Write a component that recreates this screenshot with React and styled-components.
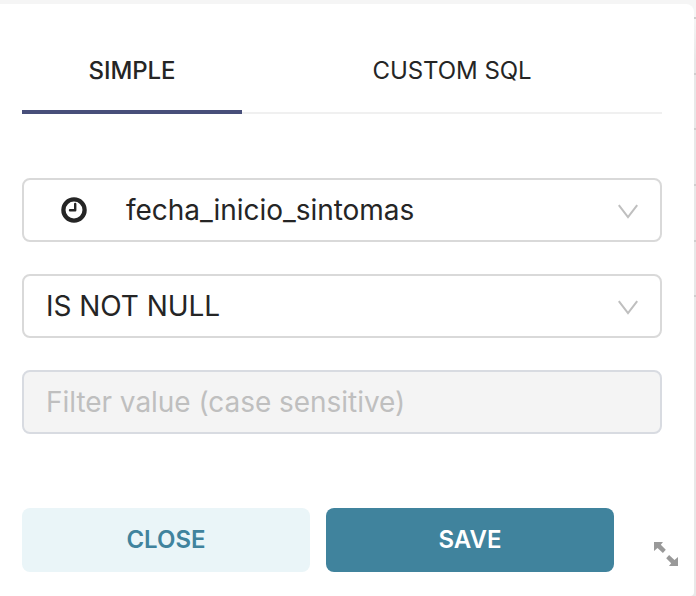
import React from 'react';
import styled, { createGlobalStyle } from 'styled-components';

const Global = createGlobalStyle`
  * { box-sizing: border-box; }
  html, body { margin: 0; background: #fff; overflow: hidden; }
  body { font-family: Inter, "Liberation Sans", sans-serif; color: #252525; }
`;
const Backdrop = styled.div`
  height: 596px;
  width: 696px;
  padding-top: 4px;
  display: flex;
  background: linear-gradient(#f5f5f5 0 16px, #e8e8e8 60px);
`;
const Popover = styled.main`
  width: 694px;
  flex: none;
  height: 592px;
  padding: 26px 32px 24px 22px;
  background: #fff;
  border-radius: 0 8px 4px 0;
  display: flex;
  flex-direction: column;
`;
const TableEdge = styled.div`
  width: 2px;
  height: 281px;
  margin-top: 13px;
  background: repeating-linear-gradient(#cfcfcf 0 2px, transparent 2px 55.67px);
`;
const Tabs = styled.nav`
  display: flex;
  height: 84px;
  border-bottom: 2px solid #f0f0f0;
`;
const Tab = styled.button`
  width: ${p => p.$width}px;
  height: 84px;
  padding: 2px 0 0 0;
  border: 0;
  border-bottom: 4px solid ${p => (p.$active ? '#484f7a' : 'transparent')};
  background: none;
  font: ${p => (p.$active ? 500 : 400)} 24px/78px Inter, sans-serif;
  letter-spacing: -0.06px;
  color: #252525;
`;
const Fields = styled.section`
  display: grid;
  gap: 32px;
  margin-top: 64px;
`;
const Field = styled.div`
  height: 64px;
  padding: 0 22px;
  display: flex;
  align-items: center;
  border: 2px solid ${p => (p.$disabled ? '#d8dbe1' : '#d9d9d9')};
  border-radius: 8px;
  background: ${p => (p.$disabled ? '#f4f4f4' : '#fff')};
  color: ${p => (p.$disabled ? '#bfbfbf' : '#252525')};
  font-size: 28px;
`;
const Value = styled.span`
  letter-spacing: -0.04px;
  white-space: nowrap;
`;
const Clock = styled.svg`
  margin: 0 39px 0 15px;
`;
const Arrow = styled.svg`
  margin: 4px -1px 0 auto;
`;
const Actions = styled.footer`
  display: flex;
  gap: 16px;
  margin: 74px -20px 0 0;
`;
const Button = styled.button`
  width: 288px;
  height: 64px;
  flex: none;
  border: 0;
  padding: 0;
  border-radius: 8px;
  background: ${p => (p.$primary ? '#40839d' : '#eaf5f8')};
  color: ${p => (p.$primary ? '#fff' : '#40839d')};
  font: 600 24px/64px Inter, sans-serif;
`;
const Resize = styled.svg`
  margin: 34px 0 0 24px;
  flex: none;
`;
const Chevron = () => (
  <Arrow width="22" height="16" viewBox="0 0 22 16" fill="none" stroke="#bfbfbf" strokeWidth="2">
    <path d="M1.8 1.2 11 13.2 20.2 1.2" />
  </Arrow>
);

export default function App() {
  return (
    <Backdrop>
      <Global />
      <Popover>
        <Tabs>
          <Tab $active $width={220}>SIMPLE</Tab>
          <Tab $width={420}>CUSTOM SQL</Tab>
        </Tabs>
        <Fields>
          <Field>
            <Clock width="26" height="26" viewBox="0 0 26 26" fill="none" stroke="#252525">
              <circle cx="13" cy="13" r="10.6" strokeWidth="4.3" />
              <path d="M14.2 7v6.3H9" strokeWidth="2.4" strokeLinecap="round" strokeLinejoin="round" />
            </Clock>
            <Value>fecha_inicio_sintomas</Value>
            <Chevron />
          </Field>
          <Field><Value>IS NOT NULL</Value><Chevron /></Field>
          <Field $disabled><Value>Filter value (case sensitive)</Value></Field>
        </Fields>
        <Actions>
          <Button>CLOSE</Button>
          <Button $primary>SAVE</Button>
          <Resize width="24" height="24" viewBox="0 0 24 24" fill="#999">
            <path d="M0 0h9L6.8 2.7l5 5-2.9 3.3-5.4-5L0 9z" />
            <path d="M24 24h-9l2.2-2.7-5-5 2.9-3.3 5.4 5L24 15z" />
          </Resize>
        </Actions>
      </Popover>
      <TableEdge />
    </Backdrop>
  );
}
